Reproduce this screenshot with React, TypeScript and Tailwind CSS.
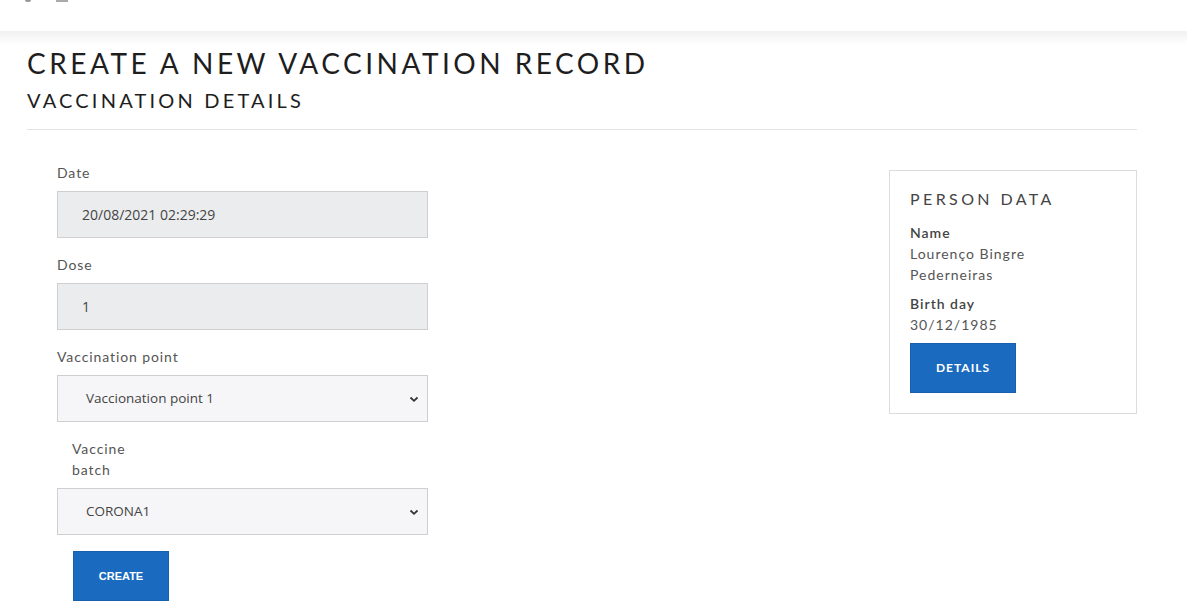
import React from 'react';

const heading = { fontFamily: 'Lato, "Open Sans", sans-serif' };

const ChevronDown: React.FC = () => (
  <svg width="10" height="10" viewBox="0 0 10 10" className="text-[#333]">
    <path d="M1.5 3.5 L5 6.8 L8.5 3.5" fill="none" stroke="currentColor" strokeWidth="1.8" />
  </svg>
);

const Field: React.FC<{ label: string; value: string; select?: boolean; labelClass?: string }> = ({
  label,
  value,
  select,
  labelClass = '',
}) => (
  <div className="flex flex-col">
    <label className={`text-[14px] leading-[21px] tracking-[0.9px] text-[#555] mb-[8px] ${labelClass}`}>{label}</label>
    <div
      className={`w-[371px] h-[47px] border border-[#cfcfd2] flex items-center justify-between pr-[8px] text-[#444] ${
        select ? 'bg-[#f6f6f8] pl-[28px] text-[13.5px]' : 'bg-[#ebecee] pl-[24px] text-[14px]'
      }`}
      style={{ fontFamily: '"Open Sans", "Liberation Sans", sans-serif' }}
    >
      <span>{value}</span>
      {select && <ChevronDown />}
    </div>
  </div>
);

const App: React.FC = () => {
  return (
    <div className="w-[1187px] h-[616px] bg-white overflow-hidden" style={heading}>
      <header className="h-[31px] bg-white relative">
        <div className="absolute left-[25px] top-0 w-[6px] h-[2px] bg-[#999] rounded-b" />
        <div className="absolute left-[56px] top-0 w-[12px] h-[2px] bg-[#aaa]" />
      </header>
      <div className="h-[14px] bg-gradient-to-b from-[#f1f1f1] to-white" />

      <main className="px-[27px] w-[1164px]">
        <h1 className="text-[28px] leading-[34px] tracking-[3.5px] text-[#1e1e1e] mt-[1px]">
          CREATE A NEW VACCINATION RECORD
        </h1>
        <h2 className="text-[20px] leading-[26px] tracking-[3.2px] text-[#1e1e1e] mt-[7px]">VACCINATION DETAILS</h2>
        <hr className="border-t border-[#e2e2e2] mt-[16px]" />

        <div className="flex justify-between mt-[32px]">
          <div className="flex flex-col gap-[16px] pl-[30px]">
            <Field label="Date" value="20/08/2021 02:29:29" />
            <Field label="Dose" value="1" />
            <Field label="Vaccination point" value="Vaccionation point 1" select />
            <Field label="Vaccine batch" value="CORONA1" select labelClass="w-[70px] ml-[15px]" />
            <button
              className="w-[96px] h-[50px] bg-[#1a6abf] text-white text-[11px] font-bold ml-[16px] border border-[#1760ad]"
              style={{ fontFamily: '"Liberation Sans", Arial, sans-serif' }}
            >
              CREATE
            </button>
          </div>

          <aside className="w-[248px] h-[244px] border border-[#dcdcdc] px-[20px] pt-[18px] mt-[8px]">
            <h3 className="text-[16px] leading-[20px] tracking-[3.4px] text-[#444]">PERSON DATA</h3>
            <dl className="text-[14px] leading-[21px] tracking-[1px] mt-[13px]">
              <dt className="text-[#444] font-semibold">Name</dt>
              <dd className="text-[#555]">
                Lourenço Bingre
                <br />
                Pederneiras
              </dd>
              <dt className="text-[#444] font-semibold mt-[8px]">Birth day</dt>
              <dd className="text-[#555]">30/12/1985</dd>
            </dl>
            <button className="w-[106px] h-[50px] bg-[#1a6abf] text-white text-[12px] font-bold tracking-[1px] mt-[8px] border border-[#1760ad]">
              DETAILS
            </button>
          </aside>
        </div>
      </main>
    </div>
  );
};

export default App;
